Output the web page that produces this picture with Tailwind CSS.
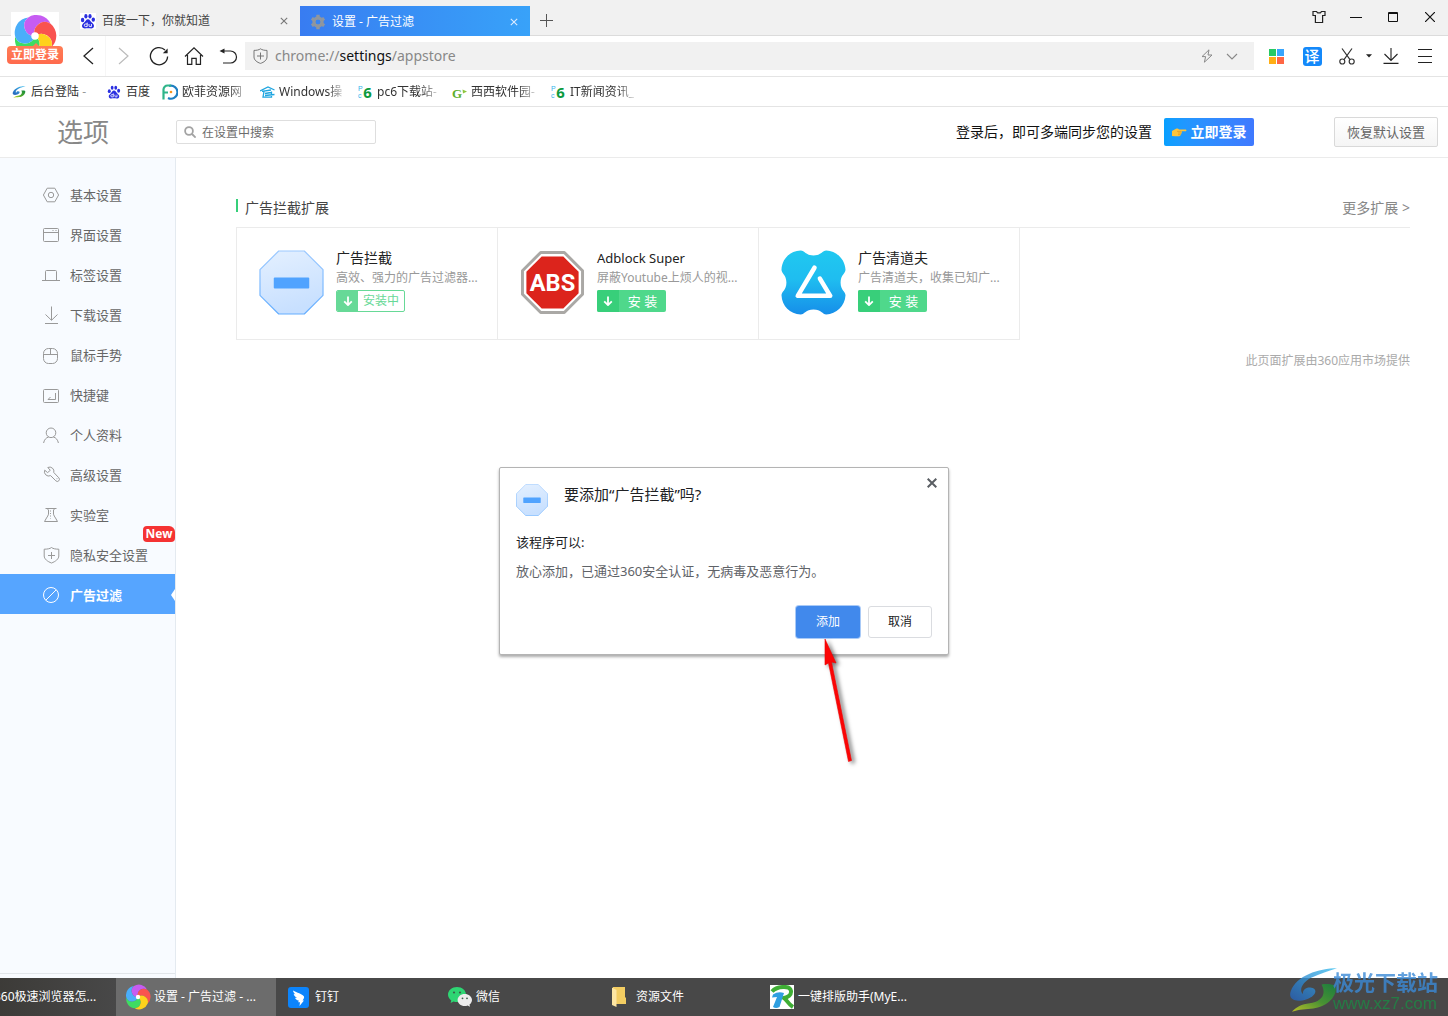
<!DOCTYPE html>
<html lang="zh-CN">
<head>
<meta charset="utf-8">
<meta name="viewport" content="width=device-width, initial-scale=1">
<title>设置 - 广告过滤</title>
<script src="https://cdn.jsdelivr.net/npm/@tailwindcss/browser@4"></script>
</head>
<body class="flex min-h-screen flex-col overflow-x-hidden bg-white font-['Noto_Sans','Noto_Sans_CJK_SC',sans-serif] text-[13px] leading-5 text-[#333]">

<!-- Shared symbols -->
<svg class="absolute h-0 w-0" aria-hidden="true">
  <defs>
    <linearGradient id="octFill" x1="0" y1="0" x2="0.3" y2="1"><stop offset="0" stop-color="#e4f0ff"/><stop offset="1" stop-color="#c8e0ff"/></linearGradient>
    <linearGradient id="octLine" x1="0" y1="0" x2="0" y2="1"><stop offset="0" stop-color="#9cc9ff"/><stop offset="1" stop-color="#63adff"/></linearGradient>
    <linearGradient id="cleanFill" x1="0" y1="0" x2="0" y2="1"><stop offset="0" stop-color="#20c8f0"/><stop offset=".45" stop-color="#1fbdf0"/><stop offset="1" stop-color="#168ee9"/></linearGradient>
    <linearGradient id="swBlue" x1="1" y1="0" x2="0" y2="1"><stop offset="0" stop-color="#3cc0f0"/><stop offset="1" stop-color="#2560b8"/></linearGradient>
    <linearGradient id="swGreen" x1="0" y1="1" x2="1" y2="0"><stop offset="0" stop-color="#d6dc1f"/><stop offset=".5" stop-color="#4aa52f"/><stop offset="1" stop-color="#128a3c"/></linearGradient>
    <symbol id="octagon" viewBox="0 0 66 66">
      <path d="M20 1H46L65 20V46L46 65H20L1 46V20Z" fill="url(#octFill)" stroke="url(#octLine)" stroke-width="1.2" stroke-linejoin="round"/>
      <rect x="15" y="28" width="36" height="11" rx="1" fill="#50a3ff"/>
    </symbol>
    <symbol id="pinwheel" viewBox="-20 -20 40 40">
      <path transform="rotate(196)" d="M0 0A9.500 9.500 0 0 1 0-18A14 14 0 0 1 17.100-5.600A9.500 9.500 0 0 0 0 0" fill="#3fdc62"/>
      <path transform="rotate(268)" d="M0 0A9.500 9.500 0 0 1 0-18A14 14 0 0 1 17.100-5.600A9.500 9.500 0 0 0 0 0" fill="#4aaefa"/>
      <path transform="rotate(-20)" d="M0 0A9.500 9.500 0 0 1 0-18A14 14 0 0 1 17.100-5.600A9.500 9.500 0 0 0 0 0" fill="#c65cf2"/>
      <path transform="rotate(52)" d="M0 0A9.500 9.500 0 0 1 0-18A14 14 0 0 1 17.100-5.600A9.500 9.500 0 0 0 0 0" fill="#f9534f"/>
      <path transform="rotate(124)" d="M0 0A9.500 9.500 0 0 1 0-18A14 14 0 0 1 17.100-5.600A9.500 9.500 0 0 0 0 0" fill="#ffd21c"/>
      <circle r="3.4" fill="#fff"/>
    </symbol>
    <symbol id="paw" viewBox="0 0 16 16">
      <g fill="#2a2fe0"><ellipse cx="2.6" cy="7" rx="1.7" ry="2.2"/><ellipse cx="5.9" cy="3.2" rx="1.6" ry="2.3"/><ellipse cx="10" cy="3.2" rx="1.6" ry="2.3"/><ellipse cx="13.3" cy="6.6" rx="1.7" ry="2.2"/>
      <path d="M8 6.3C6.2 6.3 5.6 8.3 4.2 9.6C2.6 11 1.7 12 2.1 13.6C2.8 16.2 5.6 15.2 8 15.2C10.4 15.2 13.2 16.2 13.9 13.6C14.3 12 13.4 11 11.8 9.6C10.4 8.3 9.8 6.3 8 6.3Z"/></g>
      <path d="M7.2 9.6v4H5.6a1.3 1.3 0 0 1 0-2.6h1.6M9 11v1.6a1 1 0 0 0 1 1h1.4V11" fill="none" stroke="#fff" stroke-width=".9"/>
    </symbol>
    <symbol id="swirl" viewBox="0 0 130 118">
      <path d="M130 0C80 0 20 20 5 62C-4 86 20 94 48 84C74 76 80 54 58 52C44 51 36 60 38 70C26 60 36 38 60 26C84 14 108 8 130 0Z" fill="url(#swBlue)"/>
      <path d="M88 44C102 42 116 43 126 48C132 76 104 104 66 109C46 111 30 111 8 118C20 105 34 97 56 95C84 91 104 74 88 44Z" fill="url(#swGreen)"/>
    </symbol>
    <symbol id="pc6" viewBox="0 0 16 16">
      <text x="0" y="7" font-size="8" font-family="Liberation Sans" fill="#35b4ea">P</text>
      <text x="0" y="15" font-size="8" font-family="Liberation Sans" fill="#35b4ea">c</text>
      <text x="6" y="14.5" font-size="17" font-weight="bold" font-family="Open Sans" fill="#0c9a3e">6</text>
    </symbol>
    <symbol id="arrowDown" viewBox="0 0 10 10"><path d="M5 .5V9M1.2 5.4L5 9.1L8.8 5.4" fill="none" stroke="#fff" stroke-width="1.8"/></symbol>
  </defs>
</svg>

<header class="relative">
  <!-- Tab strip -->
  <div class="flex h-9 items-end border-b border-[#dcdcdc] bg-[#f1f1f1] pl-[70px]">
    <div class="flex h-[30px] w-[230px] items-center pt-[2px] pr-3 pl-[10px] text-xs text-[#444]">
      <svg class="mr-[6px] h-4 w-4 bg-white"><use href="#paw"/></svg>
      <span class="flex-1">百度一下，你就知道</span>
      <button aria-label="关闭标签"><svg class="h-2 w-2" viewBox="0 0 8 8"><path d="M.8 .8L7.2 7.2M7.2 .8L.8 7.2" stroke="#777" stroke-width="1.1"/></svg></button>
    </div>
    <div class="-mb-px flex h-[30px] w-[230px] items-center bg-linear-to-r from-[#387cf1] via-[#3890f5] to-[#38a2f9] pt-[2px] pr-3 pl-[10px] text-xs text-white">
      <svg class="mr-[6px] h-4 w-4" viewBox="0 0 16 16"><circle cx="8" cy="8" r="4" fill="none" stroke="#8f969f" stroke-width="3.4"/><path d="M8 .8V4M8 12v3.2M1.8 4.4L4.4 6M11.6 10l2.6 1.6M1.8 11.6L4.4 10M11.6 6l2.6-1.6" stroke="#8f969f" stroke-width="3.4"/><circle cx="8" cy="8" r="2.3" fill="#3885f3"/></svg>
      <span class="flex-1">设置 - 广告过滤</span>
      <button aria-label="关闭标签"><svg class="h-2 w-2" viewBox="0 0 8 8"><path d="M.8 .8L7.2 7.2M7.2 .8L.8 7.2" stroke="#dcebff" stroke-width="1.1"/></svg></button>
    </div>
    <button class="flex h-[30px] w-8 items-center justify-center" aria-label="新标签"><svg class="h-[13px] w-[13px]" viewBox="0 0 13 13"><path d="M6.5 0v13M0 6.5h13" stroke="#555"/></svg></button>
    <div class="ml-auto flex h-9 items-center">
      <button class="flex w-[37px] justify-center" aria-label="皮肤"><svg class="h-[14px] w-[14px]" viewBox="0 0 14 14" fill="none" stroke="#222" stroke-width="1.2"><path d="M4.5 1.5H1V5.5H3.4V12.5H10.6V5.5H13V1.5H9.5L8.3 2.8H5.7Z"/></svg></button>
      <button class="flex w-[37px] justify-center" aria-label="最小化"><svg class="h-3 w-3" viewBox="0 0 12 12"><path d="M0 6.5h12" stroke="#111"/></svg></button>
      <button class="flex w-[37px] justify-center" aria-label="最大化"><svg class="h-[10px] w-[10px]" viewBox="0 0 10 10"><path d="M.5 .5h9v9h-9ZM0 1.5h10" fill="none" stroke="#111"/></svg></button>
      <button class="flex w-[37px] justify-center" aria-label="关闭"><svg class="h-[10px] w-[10px]" viewBox="0 0 10 10"><path d="M0 0L10 10M10 0L0 10" stroke="#111" stroke-width="1.2"/></svg></button>
    </div>
  </div>

  <!-- Toolbar -->
  <div class="flex h-[41px] items-center border-b border-[#e4e4e4] pr-[6px] pl-[70px]">
    <button class="flex w-[35px] justify-center" aria-label="后退"><svg class="h-[18px] w-3" viewBox="0 0 12 18"><path d="M11 1L2 9l9 8" fill="none" stroke="#222" stroke-width="1.3"/></svg></button>
    <button class="flex h-10 w-9 items-center justify-center border-l border-[#f6f6f6]" aria-label="前进"><svg class="h-[18px] w-3" viewBox="0 0 12 18"><path d="M1 1l9 8l-9 8" fill="none" stroke="#bbb" stroke-width="1.2"/></svg></button>
    <button class="flex w-[35px] justify-center" aria-label="刷新"><svg class="h-5 w-5" viewBox="0 0 20 20"><path d="M18.6 10.5A8.6 8.6 0 1 1 16 4" fill="none" stroke="#222" stroke-width="1.3"/><path d="M18.6 2.6V7.2H13.8Z" fill="#222"/></svg></button>
    <button class="flex w-[35px] justify-center" aria-label="主页"><svg class="h-5 w-5" viewBox="0 0 20 20"><path d="M1 10.5L10 1.8L19 10.5M3.5 9V18.4H7.8V12.4H12.2V18.4H16.5V9" fill="none" stroke="#222" stroke-width="1.2"/></svg></button>
    <button class="flex w-[34px] justify-center" aria-label="恢复"><svg class="h-5 w-5" viewBox="0 0 20 20"><path d="M4 5H12.500A6 6 0 0 1 12.500 17H5" fill="none" stroke="#222" stroke-width="1.2"/><path d="M1.5 5L6.500 2.500V7.500Z" fill="#222"/></svg></button>
    <div class="mr-1 flex h-7 flex-1 items-center bg-[#f1f1f1] px-2">
      <svg class="mr-[7px] h-4 w-[15px]" viewBox="0 0 15 16" fill="none" stroke="#777"><path d="M7.5 .8C9 2 11.5 2.4 14 2.4V9C14 12 11 14.3 7.5 15.4C4 14.3 1 12 1 9V2.4C3.5 2.4 6 2 7.5 .8ZM7.5 4.5v7M4 8h7"/></svg>
      <a href="#" class="flex-1 text-sm text-[#888]">chrome://<span class="text-[#111]">settings</span>/appstore</a>
      <button class="mr-[13px]" aria-label="极速模式"><svg class="h-[14px] w-3" viewBox="0 0 12 14"><path d="M8 .8L1 7.6H4.6L3.4 13.2L11 6H7Z" fill="none" stroke="#888"/></svg></button>
      <button class="mr-2" aria-label="展开"><svg class="h-3 w-3" viewBox="0 0 12 12"><path d="M1 4L6 9L11 4" fill="none" stroke="#888" stroke-width="1.1"/></svg></button>
    </div>
    <button class="flex w-9 justify-center" aria-label="应用"><svg class="h-[15px] w-[15px]" viewBox="0 0 15 15"><path d="M0 0h7v7H0Z" fill="#27c964"/><path d="M8 0h7v7H8Z" fill="#38a5fc"/><path d="M0 8h7v7H0Z" fill="#ffae14"/><path d="M8 8h7v7H8Z" fill="#ff6644"/></svg></button>
    <button class="flex w-9 justify-center" aria-label="翻译"><span class="h-[19px] w-[19px] rounded-[3px] bg-[#1489fa] text-center text-[15px] leading-[19px] font-medium text-white">译</span></button>
    <button class="flex w-[34px] justify-center" aria-label="截图"><svg class="h-[17px] w-4" viewBox="0 0 16 17" fill="none" stroke="#333" stroke-width="1.2"><path d="M3 .5L11 11.6M13 .5L5 11.6"/><circle cx="3.3" cy="13.5" r="2.5"/><circle cx="12.7" cy="13.5" r="2.5"/></svg></button>
    <button class="flex w-[10px] justify-center" aria-label="截图选项"><svg class="h-1 w-[6px]" viewBox="0 0 6 4"><path d="M0 .3h6L3 3.6Z" fill="#222"/></svg></button>
    <button class="flex w-[34px] justify-center" aria-label="下载"><svg class="h-4 w-4" viewBox="0 0 16 16" fill="none" stroke="#222" stroke-width="1.1"><path d="M8 0v12.4M1.5 6L8 12.4L14.5 6M.5 15.4h15"/></svg></button>
    <button class="flex w-[34px] justify-center" aria-label="菜单"><svg class="h-[14px] w-[14px]" viewBox="0 0 14 14"><path d="M0 .5h14M0 7.5h14M0 13.5h14" stroke="#222"/></svg></button>
  </div>

  <!-- Bookmarks -->
  <nav class="flex h-[30px] items-center gap-3 border-b border-[#e4e4e4] pl-3 text-xs whitespace-nowrap" aria-label="书签栏">
    <a href="#" class="flex w-[83px] items-center gap-[5px]"><svg class="h-3 w-[14px]"><use href="#swirl"/></svg><span>后台登陆 <span class="text-[#999]">-</span></span></a>
    <a href="#" class="flex items-center gap-[5px]"><svg class="h-[14px] w-[14px]"><use href="#paw"/></svg>百度</a>
    <a href="#" class="flex w-[86px] items-center gap-1"><svg class="h-4 w-4" viewBox="0 0 16 16" fill="none"><path d="M7 2A6.500 6.500 0 1 1 6 14" stroke="#1e7fc2" stroke-width="2.2"/><path d="M1.5 15.500V5.5A4 4 0 0 1 5.500 1.500H9M1.5 8.500H6" stroke="#2fb58a" stroke-width="2.2"/><circle cx="9" cy="8" r="1.3" fill="#f7941d"/></svg><span class="w-[60px] overflow-hidden [mask-image:linear-gradient(to_right,black_75%,#0006)]">欧菲资源网</span></a>
    <a href="#" class="flex w-[86px] items-center gap-1"><svg class="h-3 w-[15px]" viewBox="0 0 15 12" fill="none" stroke="#1ea5e0" stroke-width="1.3"><path d="M0 5L8 1L14.500 4M2 5.400L11 4M4 5.500L3 11.200H11.500V5.500M5 7.500L11 6.500M5 9.500L14.500 8.500"/></svg><span class="w-16 overflow-hidden [mask-image:linear-gradient(to_right,black_75%,#0003)]">Windows操</span></a>
    <a href="#" class="flex w-[82px] items-center gap-[5px]"><svg class="h-[14px] w-[14px]"><use href="#pc6"/></svg><span class="w-[60px] overflow-hidden [mask-image:linear-gradient(to_right,black_75%,#0003)]">pc6下载站-</span></a>
    <a href="#" class="flex w-[87px] items-center gap-1"><svg class="h-4 w-[15px]" viewBox="0 0 15 16"><text x="0" y="14" font-family="Liberation Serif" font-weight="bold" font-size="13" fill="#5fae2c">G</text><path d="M10.500 5.500l4.500 2L11 9.500Z" fill="#8cc63f"/></svg><span class="w-16 overflow-hidden [mask-image:linear-gradient(to_right,black_75%,#0003)]">西西软件园-</span></a>
    <a href="#" class="flex items-center gap-[5px]"><svg class="h-[14px] w-[14px]"><use href="#pc6"/></svg><span class="w-16 overflow-hidden [mask-image:linear-gradient(to_right,black_75%,#0003)]">IT新闻资讯_</span></a>
  </nav>

  <!-- Account badge over both bars -->
  <a href="#" class="absolute top-3 left-[7px] flex w-14 flex-col items-center">
    <span class="flex h-[34px] w-12 justify-center overflow-hidden bg-white pt-[2px]"><svg class="h-11 w-11 shrink-0"><use href="#pinwheel"/></svg></span>
    <span class="relative w-14 rounded-sm bg-linear-to-b from-[#ff7d55] to-[#ff6a4d] text-center text-xs leading-[18px] font-bold text-white"><svg class="absolute -top-[3px] left-[25px] h-1 w-2" viewBox="0 0 8 4"><path d="M0 4L4 0L8 4Z" fill="#ff7d55"/></svg>立即登录</span>
  </a>
</header>

<div class="relative flex flex-1 flex-col">
  <!-- Settings header -->
  <div class="flex h-[51px] items-center border-b border-[#ebebeb] pr-[10px]">
    <h1 class="w-44 pl-[57px] text-[26px] leading-8 text-[#888]">选项</h1>
    <label class="flex h-6 w-[200px] items-center rounded-xs border border-[#dedede] pl-[7px]">
      <svg class="mr-[6px] h-3 w-3 shrink-0" viewBox="0 0 12 12" fill="none" stroke="#a3a3a3" stroke-width="1.8"><circle cx="5" cy="5" r="3.9"/><path d="M8 8l3.6 3.6"/></svg>
      <input type="text" aria-label="在设置中搜索" placeholder="在设置中搜索" class="w-full min-w-0 pt-[2px] text-xs outline-none placeholder:text-[#6c6c6c]">
    </label>
    <p class="ml-auto text-sm text-[#111]">登录后，即可多端同步您的设置</p>
    <button class="ml-3 flex h-7 w-[90px] items-center justify-center gap-1 rounded-xs bg-linear-to-r from-[#06a0ff] to-[#3f79ff] text-sm font-bold text-white">
      <svg class="h-[9px] w-[15px]" viewBox="0 0 15 9"><path d="M0 3L4.5 .6Q6 0 7 1.4H14Q15 2.3 14 3.2H9.6Q10.5 4.4 9.4 5Q9.8 6.3 8.6 6.7Q8.7 8 7.2 8.2H3L0 8Z" fill="#fdc43a"/><path d="M5 3.4H9.4M6 5H9.2M6 6.7H8.5" stroke="#d98a1f" stroke-width=".6"/></svg>立即登录
    </button>
    <button class="ml-20 h-[30px] w-[104px] rounded-xs border border-[#d9d9d9] bg-linear-to-b from-white to-[#f5f5f5] text-[13px] text-[#666]">恢复默认设置</button>
  </div>

  <div class="flex flex-1">
    <!-- Sidebar -->
    <aside class="flex w-44 shrink-0 flex-col border-r border-[#e4eaf0] bg-[#f8fbff] pb-1">
      <nav class="flex flex-1 flex-col border-b border-[#e2e6ea] pt-4 text-[#666]" aria-label="设置分类">
        <a href="#" class="flex h-10 items-center gap-[10px] pt-[2px] pl-[42px]"><svg class="h-[18px] w-[18px]" viewBox="0 0 18 18" fill="none" stroke="#999"><path d="M5.2 2.2H12.8L16.6 9L12.8 15.8H5.2L1.4 9Z"/><circle cx="9" cy="9" r="2.7"/></svg>基本设置</a>
        <a href="#" class="flex h-10 items-center gap-[10px] pt-[2px] pl-[42px]"><svg class="h-[18px] w-[18px]" viewBox="0 0 18 18" fill="none" stroke="#999"><rect x="1.5" y="2.5" width="15" height="13" rx="1"/><path d="M1.5 6.5h15M10.5 4.5h1M13.5 4.5h1"/></svg>界面设置</a>
        <a href="#" class="flex h-10 items-center gap-[10px] pt-[2px] pl-[42px]"><svg class="h-[18px] w-[18px]" viewBox="0 0 18 18" fill="none" stroke="#999"><path d="M0 14.5h18M3.5 14.5V5.5a1 1 0 0 1 1-1h9a1 1 0 0 1 1 1V14.5"/></svg>标签设置</a>
        <a href="#" class="flex h-10 items-center gap-[10px] pt-[2px] pl-[42px]"><svg class="h-[18px] w-[18px]" viewBox="0 0 18 18" fill="none" stroke="#999"><path d="M9.5 .5V14M3.5 8.5L9.5 14.3L15.5 8.5M3 17.5h13"/></svg>下载设置</a>
        <a href="#" class="flex h-10 items-center gap-[10px] pt-[2px] pl-[42px]"><svg class="h-[18px] w-[18px]" viewBox="0 0 18 18" fill="none" stroke="#999"><rect x="1.5" y="2.5" width="14" height="15" rx="5"/><path d="M1.5 8.5h14M8.5 2.5v6"/></svg>鼠标手势</a>
        <a href="#" class="flex h-10 items-center gap-[10px] pt-[2px] pl-[42px]"><svg class="h-[18px] w-[18px]" viewBox="0 0 18 18" fill="none" stroke="#999"><rect x="1.5" y="3.5" width="15" height="13" rx="1"/><path d="M13.5 7v6.5H6.5M8.5 11L6 13.5h2.5"/></svg>快捷键</a>
        <a href="#" class="flex h-10 items-center gap-[10px] pt-[2px] pl-[42px]"><svg class="h-[18px] w-[18px]" viewBox="0 0 18 18" fill="none" stroke="#999"><circle cx="9" cy="6.800" r="4.8"/><path d="M1.6 17C2.2 13.700 4 11.800 6.6 11M16.4 17C15.8 13.700 14 11.800 11.4 11"/></svg>个人资料</a>
        <a href="#" class="flex h-10 items-center gap-[10px] pt-[2px] pl-[42px]"><svg class="h-[18px] w-[18px]" viewBox="0 0 18 18" fill="none" stroke="#999"><path d="M11.800 6.500L16.800 11.800A2 2 0 0 1 13.800 14.800L8.600 9.600A4.300 4.300 0 0 1 2.700 4.200L5.600 6.600L8.300 4.300L5.800 1.500A4.300 4.300 0 0 1 11.800 6.500Z"/><path d="M14.600 12.700h.8"/></svg>高级设置</a>
        <a href="#" class="flex h-10 items-center gap-[10px] pt-[2px] pl-[42px]"><svg class="h-[18px] w-[18px]" viewBox="0 0 18 18" fill="none" stroke="#999"><path d="M3.500 2.500H14.500M5 2.500L6.500 4V8.2Q6 10 4.500 12L2.500 15.500H15.500L13.500 12Q12 10 11.500 8.2V4L13 2.500"/><path d="M8.500 4.5v8" stroke-dasharray="1 1.5"/></svg>实验室</a>
        <a href="#" class="relative flex h-10 items-center gap-[10px] pt-[2px] pl-[42px]"><svg class="h-[18px] w-[18px]" viewBox="0 0 18 18" fill="none" stroke="#999"><path d="M9.5 1.5C11 2.8 14 3.2 16.8 3.2V10C16.8 13 13.4 15.6 9.5 17C5.6 15.6 2.2 13 2.2 10V3.2C5 3.2 8 2.8 9.5 1.5ZM9.5 6v7M6 9.5h7"/></svg>隐私安全设置<span class="absolute -top-2 right-0 h-4 w-8 rounded-l-sm rounded-tr-md rounded-br-sm bg-[#f53333] text-center text-xs leading-4 font-bold text-white">New</span></a>
        <a href="#" class="flex h-10 items-center gap-[10px] bg-[#56a5ff] pt-[2px] pl-[42px] font-bold text-white" aria-current="page"><svg class="h-[18px] w-[18px]" viewBox="0 0 18 18" fill="none" stroke="#fff"><circle cx="9" cy="9" r="7.5"/><path d="M3.8 14.2L14.2 3.8"/></svg><span class="flex-1">广告过滤</span><svg class="h-3 w-1" viewBox="0 0 4 12"><path d="M4 0V12L0 6Z" fill="#fff"/></svg></a>
      </nav>
    </aside>

    <!-- Content -->
    <main class="flex-1 pt-10 pr-[38px] pl-[60px]">
      <div class="flex h-[30px] items-center justify-between border-b border-[#ebebeb] pb-[10px] text-sm">
        <h2 class="flex items-center gap-[7px] text-[#444]"><span class="mb-1 h-[13px] w-[2px] bg-[#36cf7a]"></span>广告拦截扩展</h2>
        <a href="#" class="text-[#888]">更多扩展 &gt;</a>
      </div>
      <ul class="flex border-l border-[#ebebeb]">
        <li class="flex h-28 w-[261px] gap-3 border-r border-b border-[#ebebeb] pt-[22px] pl-[22px]">
          <svg class="h-[65px] w-[65px] shrink-0"><use href="#octagon"/></svg>
          <div>
            <h3 class="h-[18px] text-sm leading-4 text-[#222]">广告拦截</h3>
            <p class="text-xs leading-5 text-[#999]">高效、强力的广告过滤器...</p>
            <button class="mt-[2px] flex h-[22px] w-[69px] overflow-hidden rounded-xs border border-[#67d997] text-xs leading-5 text-[#67d997]"><span class="flex w-[21px] items-center justify-center self-stretch bg-[#67d997]"><svg class="h-[10px] w-[10px]"><use href="#arrowDown"/></svg></span><span class="flex-1 text-center">安装中</span></button>
          </div>
        </li>
        <li class="flex h-28 w-[261px] gap-3 border-r border-b border-[#ebebeb] pt-[22px] pl-[22px]">
          <svg class="h-[65px] w-[65px] shrink-0" viewBox="0 0 66 66"><path d="M21 2.500H45L63.500 21V45L45 63.500H21L2.500 45V21Z" fill="#fff" stroke="#aaa8a5" stroke-width="3" stroke-linejoin="round"/><path d="M22 6.500H44L59.500 22V44L44 59.500H22L6.500 44V22Z" fill="#dc241c"/><text x="33" y="42" text-anchor="middle" font-family="Roboto" font-weight="bold" font-size="24" fill="#fff">ABS</text></svg>
          <div>
            <h3 class="h-[18px] text-[13px] leading-4 text-[#222]">Adblock Super</h3>
            <p class="text-xs leading-5 text-[#999]">屏蔽Youtube上烦人的视...</p>
            <button class="mt-[2px] flex h-[22px] w-[69px] overflow-hidden rounded-xs bg-[#4fd88b] text-[13px] leading-[22px] text-white"><span class="flex w-[22px] items-center justify-center self-stretch bg-[#38cf7a]"><svg class="h-[10px] w-[10px]"><use href="#arrowDown"/></svg></span><span class="flex-1 text-center">安 装</span></button>
          </div>
        </li>
        <li class="flex h-28 w-[261px] gap-3 border-r border-b border-[#ebebeb] pt-[22px] pl-[22px]">
          <svg class="h-[65px] w-[65px] shrink-0" viewBox="0 0 66 66"><path d="M20 .5C24 .5 25 5.500 33 5.500C41 5.500 42 .5 46 .5C56 1 65 9 65.500 20C65.500 24 60.500 25 60.500 33C60.500 41 65.500 42 65.500 46C65 57 56 65 46 65.500C42 65.500 41 60.500 33 60.500C25 60.500 24 65.500 20 65.500C9 65 1 57 .5 46C.5 42 5.500 41 5.500 33C5.500 25 .5 24 .5 20C1 9 9 1 20 .5Z" fill="url(#cleanFill)"/><path d="M34 18L17 46.500H50L39.500 29" fill="none" stroke="#fff" stroke-width="4.600" stroke-linecap="round" stroke-linejoin="round"/></svg>
          <div>
            <h3 class="h-[18px] text-sm leading-4 text-[#222]">广告清道夫</h3>
            <p class="text-xs leading-5 text-[#999]">广告清道夫，收集已知广...</p>
            <button class="mt-[2px] flex h-[22px] w-[69px] overflow-hidden rounded-xs bg-[#4fd88b] text-[13px] leading-[22px] text-white"><span class="flex w-[22px] items-center justify-center self-stretch bg-[#38cf7a]"><svg class="h-[10px] w-[10px]"><use href="#arrowDown"/></svg></span><span class="flex-1 text-center">安 装</span></button>
          </div>
        </li>
      </ul>
      <p class="mt-[11px] text-right text-xs leading-5 text-[#aaa]">此页面扩展由360应用市场提供</p>
    </main>
  </div>

  <!-- Taskbar -->
  <footer class="flex h-[38px] overflow-hidden bg-[#484848] text-xs whitespace-nowrap text-white">
    <button class="-ml-11 flex w-40 shrink-0 items-center bg-linear-to-r from-[#383632] to-[#484848] pl-[38px]">360极速浏览器怎...</button>
    <button class="flex w-40 items-center gap-[3px] bg-[#6c6c6c] pl-[9px]"><svg class="h-[26px] w-[26px]"><use href="#pinwheel"/></svg>设置 - 广告过滤 - ...</button>
    <button class="flex w-40 items-center gap-[6px] pl-3"><svg class="h-[21px] w-[21px]" viewBox="0 0 21 21"><rect width="21" height="21" rx="3" fill="#0c84fb"/><path d="M5 3.500C9 6 14 6.500 16 9.500C16.400 11 15.500 12.300 14.500 13.600H16L11.500 19L12 15.200H10.200L10.800 13.600C8.600 13.200 7.600 12.200 7 10.800L9 11C6.500 9.500 5.800 8.200 5.700 6.800L7.500 7.400C6 6 5.200 5 5 3.500Z" fill="#fff"/></svg>钉钉</button>
    <button class="flex w-40 items-center gap-1 pl-3"><svg class="h-5 w-6" viewBox="0 0 24 20"><path d="M9 0C4 0 0 3.400 0 7.600C0 10 1.300 12 3.300 13.400L2.600 16L5.600 14.600Q7.500 15.200 9.500 15.100C14.500 15 18 11.800 18 7.600C18 3.400 14 0 9 0Z" fill="#2ed573"/><path d="M16.700 7C12.700 7 9.600 9.700 9.600 13S12.700 19 16.700 19Q18.200 19 19.600 18.500L22 19.700L21.500 17.600C23 16.500 24 14.800 24 13C24 9.700 20.700 7 16.700 7Z" fill="#ececec"/><g fill="#3b5f49"><circle cx="6" cy="5.500" r="1.100"/><circle cx="12" cy="5.500" r="1.100"/><circle cx="14.500" cy="11.300" r=".9"/><circle cx="19" cy="11.300" r=".9"/></g></svg>微信</button>
    <button class="flex w-40 items-center gap-[10px] pl-4"><svg class="h-5 w-[14px]" viewBox="0 0 14 20"><path d="M1 0H13V10L14 11V17H1Z" fill="#f3cd62"/><path d="M0 .500L4.500 3V20L0 18Z" fill="#fde6a3"/></svg>资源文件</button>
    <button class="flex w-40 items-center gap-1 pl-[14px]"><svg class="h-6 w-6 bg-white" viewBox="0 0 24 24"><path d="M2 6.500C7 1 20 0 21 6C21.500 10 18 12.500 14 13C17 15 18 19 23 22" fill="none" stroke="#3fae35" stroke-width="4"/><path d="M3 9.500Q8 6 14 8L9.500 22Q6 24 3 22L7 12L2 12.500Z" fill="#2f9fe0"/></svg>一键排版助手(MyE...</button>
  </footer>

  <!-- Install confirmation -->
  <div class="pointer-events-none absolute inset-x-0 top-0 bottom-[2px] flex items-center justify-center">
    <section role="dialog" aria-labelledby="dlg-title" class="pointer-events-auto relative w-[450px] rounded-xs border border-[#b4b4b4] bg-white p-4 shadow-[0_2px_3px_#00000055]">
      <div class="flex h-8 gap-4">
        <svg class="h-8 w-8"><use href="#octagon"/></svg>
        <h2 id="dlg-title" class="text-[15px] leading-5 text-[#202124]">要添加“广告拦截”吗?</h2>
      </div>
      <button class="absolute top-[10px] right-[11px]" aria-label="关闭对话框"><svg class="h-[10px] w-[10px]" viewBox="0 0 10 10"><path d="M.7 .7L9.300 9.300M9.300 .7L.7 9.300" stroke="#5a5e63" stroke-width="2"/></svg></button>
      <p class="mt-4 text-[#202124]">该程序可以:</p>
      <p class="mt-[9px] text-[#5f6368]">放心添加，已通过360安全认证，无病毒及恶意行为。</p>
      <div class="mt-[25px] flex justify-end gap-2 text-xs">
        <button class="h-8 w-16 rounded-[3px] bg-[#4189ec] text-white ring-1 ring-[#a9caf7]">添加</button>
        <button class="h-8 w-16 rounded-[3px] border border-[#dadce0] text-[#202124]">取消</button>
      </div>
      <svg class="absolute top-[169px] left-[320px] h-[134px] w-10 drop-shadow-[3px_2px_2px_#00000088]" viewBox="0 0 40 134"><path d="M5 2L16 26L11.500 25L31.500 123.500L28.500 124.500L8.500 26L5 28Z" fill="#fb0505" stroke="#e00" stroke-width=".6"/></svg>
    </section>
  </div>

  <!-- Site mark -->
  <div class="pointer-events-none absolute right-[10px] bottom-1 flex items-center opacity-80">
    <svg class="-mr-1 h-11 w-12"><use href="#swirl"/></svg>
    <div class="flex flex-col">
      <span class="text-[21px] leading-7 font-bold text-[#3b8ad6]">极光下载站</span>
      <span class="font-['Liberation_Sans',sans-serif] text-[17px] leading-4 text-[#1c8a45]">www.xz7.com</span>
    </div>
  </div>
</div>
</body>
</html>
